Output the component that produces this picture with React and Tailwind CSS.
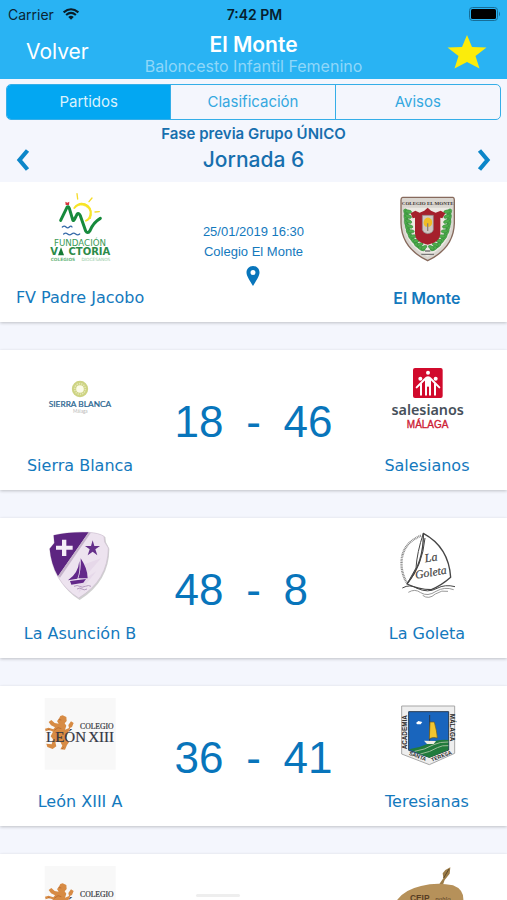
import React from "react";

const serif = '"Liberation Serif", serif';
const sans = '"Liberation Sans", sans-serif';
const lato = 'Lato, sans-serif';
const dejavu = '"DejaVu Sans", sans-serif';

function Logo({ box, label, children }) {
  return (
    <svg viewBox={box} role="img" aria-label={label} className="size-[72px] overflow-visible">
      {children}
    </svg>
  );
}

function VictoriaLogo() {
  return (
    <Logo box="132 57 216 216" label="Fundación Victoria">
      <g fill="none" strokeLinecap="round">
        <path d="M223 99 Q236 82 254 88 Q276 97 271 120 Q268 134 258 137" stroke="#f7e427" strokeWidth="6" />
        <path d="M226 97 Q244 76 264 91 Q280 106 271 132 Q278 106 257 94 Q240 85 226 97" fill="#f7e427" stroke="#f7e427" strokeWidth="2" />
        <path d="M233 72 L231 56 M267 80 L276 69 M285 111 L298 110" stroke="#f5dc2a" strokeWidth="4" />
        <path d="M182 136 L201 97 Q204 92 208 100 L218 134 Q220 140 224 132 L231 118 Q236 112 241 122 L257 168 Q263 178 270 167 Q280 142 301 130" stroke="#178a3c" strokeWidth="9" strokeLinejoin="round" />
        <path d="M187 156 q6 -5 11 0 t10 0 t8 0 M191 177 q6 -5 12 0 t12 0 t12 0 t12 0" stroke="#3569a8" strokeWidth="4" />
      </g>
      <path d="M196 80 L202 83 L208 80 L207 90 L197 90 Z" fill="#d8323d" />
      <text x="240" y="214" textAnchor="middle" fontFamily={dejavu} fontSize="26" fill="#3c9a57">FUNDACIÓN</text>
      <text x="151" y="241" fontFamily={dejavu} fontSize="30" fontWeight="700" fill="#2c8b48">V</text>
      <path d="M183 217 L174 241 H192 Z" fill="#147a34" />
      <text x="331" y="241" textAnchor="end" fontFamily={dejavu} fontSize="30" fontWeight="700" fill="#2c8b48">CTORIA</text>
      <text x="152" y="259" fontFamily={dejavu} fontSize="13" fontWeight="700" fill="#6db780">COLEGIOS</text>
      <text x="331" y="259" textAnchor="end" fontFamily={dejavu} fontSize="13" fill="#93c9a1">DIOCESANOS</text>
    </Logo>
  );
}

function MonteLogo() {
  const leaves = [
    [459, 112, 70], [459, 126, 80], [460, 141, 85], [463, 156, 75], [467, 171, 65], [474, 186, 55], [484, 199, 45], [494, 211, 35], [506, 220, 25],
  ];
  return (
    <Logo box="414 57 216 216" label="Colegio El Monte">
      <path d="M449 67 H600 Q604 68 604 75 V145 Q602 220 524 257 Q446 220 444 145 V75 Q444 68 449 67 Z" fill="#d9d5cf" stroke="#86695c" strokeWidth="4" />
      <path d="M453 98 H595 V148 Q591 211 524 245 Q457 211 453 148 Z" fill="#ece9e3" />
      <text x="524" y="90" textAnchor="middle" fontFamily="'Liberation Sans Narrow', 'Liberation Serif', serif" fontSize="15" fontWeight="700" fill="#3b3534">COLEGIO EL MONTE</text>
      {leaves.map(([x, y, r]) => (
        <g key={y} fill="#4fae4c" stroke="#31843a" strokeWidth="1.5">
          <ellipse cx={x} cy={y} rx="11" ry="6" transform={`rotate(${r} ${x} ${y})`} />
          <ellipse cx={x + 7} cy={y - 2} rx="10" ry="5" transform={`rotate(${r - 60} ${x + 7} ${y - 2})`} />
          <ellipse cx={1048 - x} cy={y} rx="11" ry="6" transform={`rotate(${-r} ${1048 - x} ${y})`} />
          <ellipse cx={1041 - x} cy={y - 2} rx="10" ry="5" transform={`rotate(${60 - r} ${1041 - x} ${y - 2})`} />
        </g>
      ))}
      <path d="M473 115 L487 107 L500 113 L514 107 L524 98 L534 107 L548 113 L563 107 L577 115 L568 130 L562 128 V176 Q561 201 524 209 Q487 201 486 176 V128 L479 130 Z" fill="#a5202c" />
      <path d="M508 121 H541 V164 Q539 174 524 176 Q510 174 508 164 Z" fill="#cfc8c3" stroke="#8c8585" strokeWidth="2" />
      <path d="M514 134 Q524 121 536 134 Q541 149 530 155 H518 Q508 148 514 134" fill="#f0bd24" />
      <path d="M524 145 V168" stroke="#8e8375" strokeWidth="4" />
      <path d="M505 238 H543 M516 228 H532" stroke="#777" strokeWidth="4" />
    </Logo>
  );
}

function SierraLogo() {
  return (
    <Logo box="132 66 216 216" label="Sierra Blanca">
      <circle cx="240" cy="147" r="18" fill="#fbfbe7" stroke="#cdd382" strokeWidth="13" />
      <circle cx="240" cy="147" r="16" fill="none" stroke="#e3e6b2" strokeWidth="5" strokeDasharray="4 3" />
      <text x="240" y="202" textAnchor="middle" fontFamily={lato} fontSize="25" fill="#2a6590" stroke="#2a6590" strokeWidth=".7">SIERRA BLANCA</text>
      <text x="241" y="220" textAnchor="middle" fontFamily={lato} fontSize="14" fill="#b9b9b9">Málaga</text>
    </Logo>
  );
}

function SalesianosLogo() {
  return (
    <Logo box="414 66 216 216" label="Salesianos Málaga">
      <rect x="480" y="84" width="89" height="90" rx="6" fill="#d10a2c" />
      <g fill="#fff">
        <circle cx="525" cy="98" r="6" />
        <circle cx="502" cy="116" r="6" />
        <circle cx="548" cy="116" r="6" />
      </g>
      <g fill="none" stroke="#fff" strokeWidth="6" strokeLinecap="round" strokeLinejoin="round">
        <path d="M491 142 L516 117 Q525 106 534 117 L559 142" />
        <path d="M519 118 V164 M531 118 V164" />
        <path d="M504 132 V164 M546 132 V164" />
      </g>
      <path d="M518 114 H532 V140 H518 Z" fill="#fff" />
      <text x="524" y="226" textAnchor="middle" fontFamily="'Noto Sans', sans-serif" fontSize="43" fontWeight="600" fill="#46505a">salesianos</text>
      <text x="524" y="263" textAnchor="middle" fontFamily={sans} fontSize="30" fill="#cd2034" stroke="#cd2034" strokeWidth="1">MÁLAGA</text>
    </Logo>
  );
}

function AsuncionLogo() {
  return (
    <Logo box="132 60 216 216" label="La Asunción">
      <path d="M163 79 Q205 67 268 68 Q300 71 316 81 L318 97 L328 116 Q328 213 239 270 Q165 225 153 120 L165 101 Z" fill="#777" opacity=".35" />
      <path d="M161 76 Q205 65 266 67 Q297 69 312 79 L314 96 L325 114 Q324 211 236 264 Q158 216 149 116 L163 99 Z" fill="#ede3ef" stroke="#cdbfd0" strokeWidth="2" />
      <path d="M161 76 Q205 65 266 67 L174 199 Q153 162 149 116 L163 99 Z" fill="#5d2581" />
      <path d="M266 67 L174 199 L180 203 L272 69 Z" fill="#c5b3ca" />
      <path d="M246 166 L303 145 L242 215 L289 184 L236 250" fill="#e3d3e7" opacity=".7" />
      <path d="M186 89 H199 V107 H218 V119 H199 V138 H186 V119 H168 V107 H186 Z" fill="#f5edf7" />
      <path d="M278 91 L283 108 L300 108 L286 118 L292 136 L278 125 L263 136 L269 118 L255 108 L273 108 Z" fill="#65308a" />
      <path d="M242 145 Q263 176 263 205 H235 Q244 180 242 145 M238 153 Q235 190 204 211 L232 206 Q241 184 238 153 M210 213 L258 207 L250 218 L214 224 Z" fill="#63288a" />
      <path d="M222 229 q10 -5 17 0 t17 0 t17 0 M231 237 q9 -5 15 0 t15 0" fill="none" stroke="#b39abe" strokeWidth="3" />
    </Logo>
  );
}

function GoletaLogo() {
  return (
    <Logo box="414 60 216 216" label="La Goleta">
      <path d="M504 77 Q440 103 446 172 Q449 198 461 217" fill="none" stroke="#8b8b8b" strokeWidth="7" strokeDasharray="3 2" />
      <g fill="none" stroke="#454545" strokeWidth="4" strokeLinejoin="round">
        <path d="M511 70 Q587 111 593 202 Q566 226 535 239 Q496 238 462 222 Q513 158 511 70 Z" />
        <path d="M511 70 Q492 127 489 174 L462 222 Q508 169 516 84" strokeWidth="3" />
        <path d="M448 234 Q471 221 492 235 Q525 250 552 235 Q576 222 606 230" strokeWidth="3" />
        <path d="M466 247 Q486 235 503 248 Q524 261 549 244 Q575 229 602 239 M509 256 Q527 270 547 252 Q567 239 585 244" stroke="#999" strokeWidth="3" />
      </g>
      <g fontFamily={serif} fontStyle="italic" fill="#444" stroke="#444" strokeWidth=".6">
        <text x="517" y="157" fontSize="36" transform="rotate(-9 517 157)">La</text>
        <text x="488" y="206" fontSize="35" transform="rotate(-9 488 206)">Goleta</text>
      </g>
    </Logo>
  );
}

function LeonLogo() {
  return (
    <Logo box="132 54 216 216" label="Colegio León XIII">
      <rect x="134" y="54" width="213" height="215" fill="#f8f8f8" />
      <path d="M175 119 L181 108 L188 106 L199 111 L200 123 L194 130 L199 137 L195 149 L207 144 L205 135 L213 124 L221 129 L216 141 L211 143 L204 158 L198 175 L207 187 L201 195 L195 209 L181 208 L187 197 L180 184 L166 187 L169 199 L158 207 L142 201 L139 191 L155 193 L159 178 L152 169 L159 155 L149 150 L137 154 L135 146 L146 143 L160 148 L165 142 L153 136 L146 126 L154 120 L164 129 L176 131 L171 123 Z" fill="#d78b44" />
      <path d="M175 118 l9 2 M163 151 l11 -8 l10 3 M171 169 l12 7 M144 148 l7 3 M191 202 l-5 5" stroke="#af622c" strokeWidth="2" fill="none" />
      <text x="341" y="148" textAnchor="end" fontFamily={serif} fontSize="23" fill="#383a43" stroke="#383a43" strokeWidth=".7">COLEGIO</text>
      <text x="138" y="185" fontFamily={serif} fontSize="45" fill="#343743" stroke="#343743" strokeWidth=".6">LEÓN</text>
      <text x="342" y="185" textAnchor="end" fontFamily={serif} fontSize="45" fill="#343743" stroke="#343743" strokeWidth=".6">XIII</text>
    </Logo>
  );
}

function TeresianasLogo() {
  return (
    <Logo box="414 54 216 216" label="Academia Santa Teresa Málaga">
      <path d="M446 78 H605 V220 L529 254 L446 222 Z" fill="#eee" stroke="#a6a6a6" strokeWidth="3" />
      <path d="M467 95 H587 V210 L529 232 L467 211 Z" fill="#1965bd" stroke="#263b52" strokeWidth="3" />
      <path d="M468 208 Q497 204 523 192 Q552 177 586 180 V210 L529 233 Z" fill="#217b3c" />
      <path d="M485 214 Q514 210 542 194 Q560 185 586 186 M502 222 Q532 216 553 203 Q568 195 586 197" fill="none" stroke="#9dbb9a" strokeWidth="3" />
      <path d="M530 105 V188" stroke="#26364c" strokeWidth="3" />
      <path d="M531 126 H544 Q552 155 553 174 Q541 170 529 176 Z" fill="#f3c52e" stroke="#665923" strokeWidth="2" />
      <path d="M513 182 L549 183 L542 192 H522 Z" fill="#f1eee5" />
      <path d="M489 129 L496 123 L508 126 L503 133 H493 Z" fill="#fff" />
      <g fontFamily={sans} fontSize="19" fontWeight="700" fill="#292929">
        <text x="463" y="208" transform="rotate(-90 463 208)">ACADEMIA</text>
        <text x="590" y="101" transform="rotate(90 590 101)">MÁLAGA</text>
        <text x="467" y="224" fontSize="16" transform="rotate(21 467 224)">SANTA</text>
        <text x="537" y="245" fontSize="16" transform="rotate(-21 537 245)">TERESA</text>
      </g>
    </Logo>
  );
}

function CeipLogo() {
  return (
    <Logo box="414 558 216 216" label="CEIP">
      <path d="M559 612 L571 595 L569 580 L577 570 L592 562 L590 581 L575 600 L570 614 Z" fill="#9d7d49" />
      <path d="M572 594 L588 567" stroke="#5e4a2b" strokeWidth="3" />
      <path d="M424 675 Q442 632 504 618 Q552 606 600 616 Q637 630 630 670 Q619 745 529 760 Q430 747 424 675" fill="#b6915a" />
      <text x="471" y="664" fontFamily={sans} fontSize="25" fontWeight="700" fill="#563d24">CEIP</text>
      <text x="547" y="664" fontFamily={serif} fontSize="20" fontStyle="italic" fill="#563d24">pablo</text>
    </Logo>
  );
}

const matches = [
  { home: "FV Padre Jacobo", away: "El Monte", favourite: true, HomeLogo: VictoriaLogo, AwayLogo: MonteLogo, date: "25/01/2019 16:30", place: "Colegio El Monte" },
  { home: "Sierra Blanca", away: "Salesianos", HomeLogo: SierraLogo, AwayLogo: SalesianosLogo, score: [18, 46] },
  { home: "La Asunción B", away: "La Goleta", HomeLogo: AsuncionLogo, AwayLogo: GoletaLogo, score: [48, 8] },
  { home: "León XIII A", away: "Teresianas", HomeLogo: LeonLogo, AwayLogo: TeresianasLogo, score: [36, 41] },
  { HomeLogo: LeonLogo, AwayLogo: CeipLogo },
];

function Team({ name, Badge, bold }) {
  return (
    <div className="flex flex-col items-center gap-5">
      <Badge />
      <p className={bold ? "h-6 font-[Inter,sans-serif] text-[16px] leading-6 font-semibold whitespace-nowrap" : "h-6 font-['DejaVu_Sans',sans-serif] text-[16px] leading-6 whitespace-nowrap"}>
        {name}
      </p>
    </div>
  );
}

function Match({ match }) {
  return (
    <li className="grid shrink-0 grid-cols-[6fr_7fr_6fr] bg-white py-3 text-[#1479bd] shadow-[0_1px_3px_rgba(0,0,0,0.22)]">
      <Team name={match.home} Badge={match.HomeLogo} />
      {match.score && (
        <div className="grid grid-cols-[1fr_60px_1fr] items-center pt-1 text-center font-['Liberation_Sans',sans-serif] text-[44px] leading-none text-[#0875bb]">
          <span className="text-right">{match.score[0]}</span>
          <span>-</span>
          <span className="text-left">{match.score[1]}</span>
        </div>
      )}
      {match.date && (
        <div className="flex flex-col items-center justify-center pt-1 font-['Liberation_Sans',sans-serif] text-[13px] leading-5">
          <time>{match.date}</time>
          <span>{match.place}</span>
          <button type="button" aria-label="Ver mapa" className="mt-1">
            <svg viewBox="0 0 14 20" className="h-5 w-3.5">
              <path fillRule="evenodd" d="M7 0 C3 0 0.500 3 0.500 6.500 C0.500 10 4 15 7 20 C10 15 13.500 10 13.500 6.500 C13.500 3 11 0 7 0 Z M7 4 A2.500 2.500 0 1 0 7 9 A2.500 2.500 0 1 0 7 4 Z" fill="#0875bb" />
            </svg>
          </button>
        </div>
      )}
      {!match.score && !match.date && (
        <div className="flex flex-col pt-7 pl-9">
          <span className="h-[3px] w-11 rounded-full bg-[#eeeeee]" />
        </div>
      )}
      <Team name={match.away} Badge={match.AwayLogo} bold={match.favourite} />
    </li>
  );
}

function Chevron({ flip, label }) {
  return (
    <button type="button" aria-label={label} className="px-4">
      <svg viewBox="0 0 14 24" className={flip ? "h-6 w-3.5 -scale-x-100" : "h-6 w-3.5"}>
        <path d="M11.500 2.500 L3.500 12 L11.500 21.500" fill="none" stroke="#0b86c9" strokeWidth="4.200" />
      </svg>
    </button>
  );
}

export default function App() {
  return (
    <div className="flex h-screen flex-col overflow-hidden bg-[#f4f6fd] font-[Inter,sans-serif]">
      <header className="bg-[#29b3f3]">
        <div className="grid h-7 grid-cols-3 items-center pr-1.5 pl-2 text-[14px] text-[#0b2533]">
          <div className="flex items-center gap-2">
            <span>Carrier</span>
            <svg viewBox="0 0 18 13" className="h-3 w-4.5" aria-hidden="true">
              <path d="M1 4.700 Q9 -2 17 4.700 M3.700 7.600 Q9 3 14.300 7.600" fill="none" stroke="#0b1d28" strokeWidth="2.300" />
              <path d="M6 9.700 Q9 7 12 9.700 L9 12.700 Z" fill="#0b1d28" />
            </svg>
          </div>
          <span className="text-center font-semibold text-[#06202e]">7:42 PM</span>
          <svg viewBox="0 0 32 14" className="h-3.5 w-8 justify-self-end" aria-hidden="true">
            <rect x="0.500" y="0.500" width="28" height="13" rx="3" fill="none" stroke="#176d97" />
            <rect x="2" y="2" width="25" height="10" rx="1.500" fill="#000" />
            <path d="M30 4.500 Q32 7 30 9.500 Z" fill="#176d97" />
          </svg>
        </div>
        <div className="grid h-[51px] grid-cols-[1fr_auto_1fr] items-center px-5">
          <button type="button" className="justify-self-start px-1.5 pb-1 text-[21px] leading-6 text-white">Volver</button>
          <div className="text-center">
            <h1 className="text-[21px] leading-6 font-semibold text-white">El Monte</h1>
            <p className="text-[16px] leading-4.5 text-[#8fd7f9]">Baloncesto Infantil Femenino</p>
          </div>
          <button type="button" aria-label="Favorito" className="justify-self-end pb-1">
            <svg viewBox="0 0 40 36" className="h-9 w-10">
              <path d="M20 1 L25 13 L39.500 13.500 L28.500 22 L32.500 34.500 L20 28 L7.500 34.500 L11.500 22 L0.500 13.500 L15 13 Z" fill="#fbec0b" />
            </svg>
          </button>
        </div>
      </header>

      <nav className="mx-1.5 mt-[5px] grid h-9 shrink-0 grid-cols-3 divide-x divide-[#35aee8] overflow-hidden rounded-[5px] border border-[#35aee8] text-[15px] text-[#35a8e0]">
        <button type="button" className="bg-[#03a7f2] text-[#d9f2fd]">Partidos</button>
        <button type="button">Clasificación</button>
        <button type="button">Avisos</button>
      </nav>

      <section className="grid shrink-0 grid-cols-1 pt-1 pb-1.5 text-center text-[#176fae]">
        <p className="text-[15px] leading-5 font-semibold">Fase previa Grupo ÚNICO</p>
        <div className="flex items-center justify-between">
          <Chevron label="Jornada anterior" />
          <h2 className="text-[21px] leading-8 font-medium">Jornada 6</h2>
          <Chevron label="Jornada siguiente" flip />
        </div>
      </section>

      <ul className="flex min-h-0 flex-1 flex-col gap-7 overflow-y-auto [scrollbar-width:none]">
        {matches.map((match, i) => (
          <Match key={i} match={match} />
        ))}
      </ul>
    </div>
  );
}
